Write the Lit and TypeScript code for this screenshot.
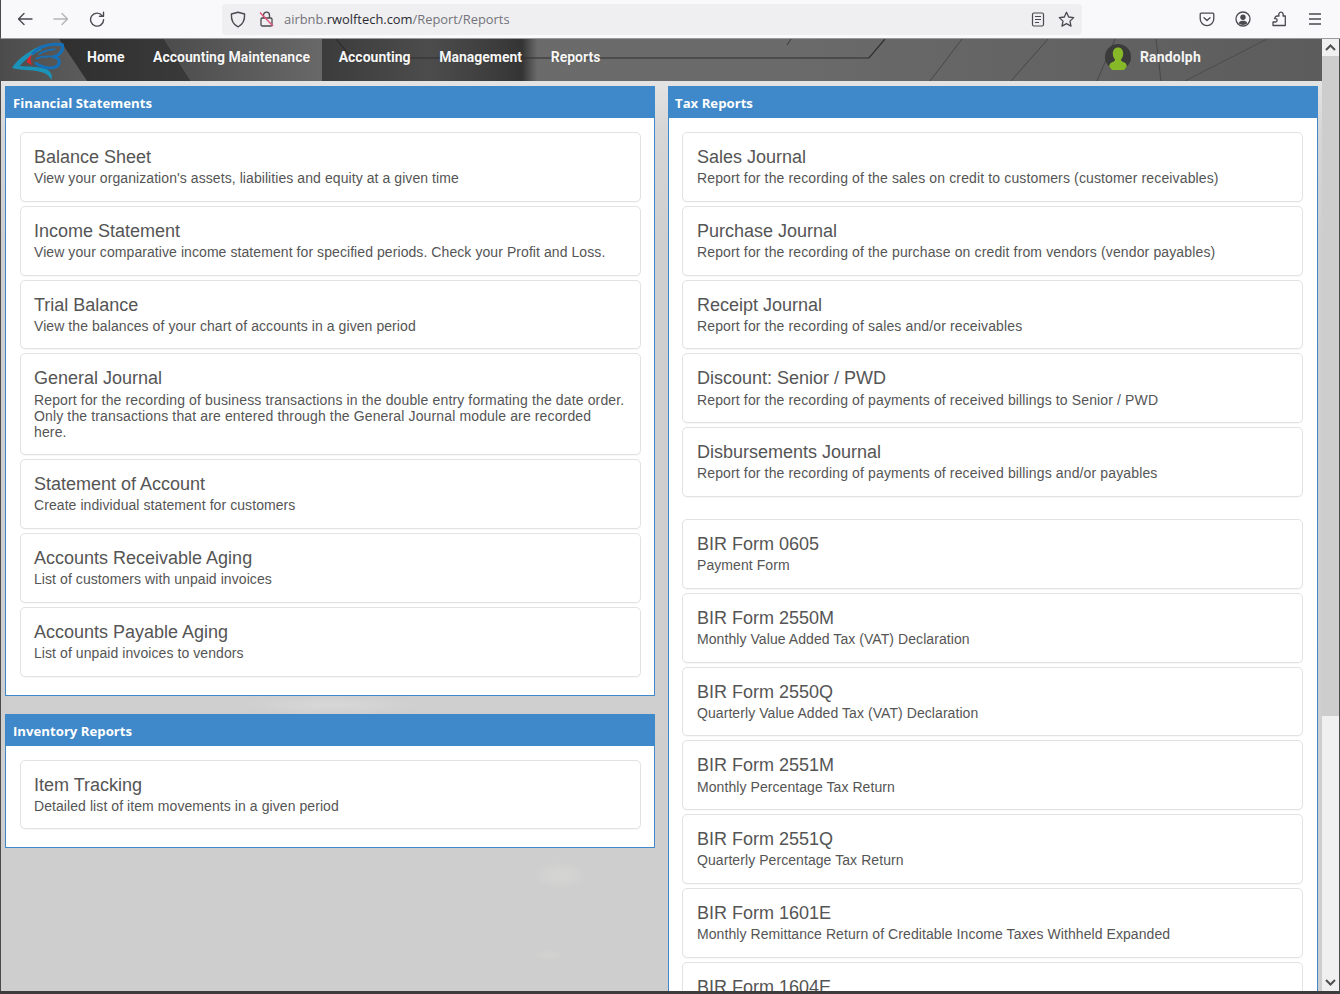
import { LitElement, html, css, svg } from "lit";
import { customElement } from "lit/decorators.js";

type Item = [string, string];

const financial: Item[] = [
  ["Balance Sheet", "View your organization's assets, liabilities and equity at a given time"],
  ["Income Statement", "View your comparative income statement for specified periods. Check your Profit and Loss."],
  ["Trial Balance", "View the balances of your chart of accounts in a given period"],
  ["General Journal", "Report for the recording of business transactions in the double entry formating the date order.\nOnly the transactions that are entered through the General Journal module are recorded\nhere."],
  ["Statement of Account", "Create individual statement for customers"],
  ["Accounts Receivable Aging", "List of customers with unpaid invoices"],
  ["Accounts Payable Aging", "List of unpaid invoices to vendors"],
];
const inventory: Item[] = [["Item Tracking", "Detailed list of item movements in a given period"]];
const journals: Item[] = [
  ["Sales Journal", "Report for the recording of the sales on credit to customers (customer receivables)"],
  ["Purchase Journal", "Report for the recording of the purchase on credit from vendors (vendor payables)"],
  ["Receipt Journal", "Report for the recording of sales and/or receivables"],
  ["Discount: Senior / PWD", "Report for the recording of payments of received billings to Senior / PWD"],
  ["Disbursements Journal", "Report for the recording of payments of received billings and/or payables"],
];
const forms: Item[] = [
  ["BIR Form 0605", "Payment Form"],
  ["BIR Form 2550M", "Monthly Value Added Tax (VAT) Declaration"],
  ["BIR Form 2550Q", "Quarterly Value Added Tax (VAT) Declaration"],
  ["BIR Form 2551M", "Monthly Percentage Tax Return"],
  ["BIR Form 2551Q", "Quarterly Percentage Tax Return"],
  ["BIR Form 1601E", "Monthly Remittance Return of Creditable Income Taxes Withheld Expanded"],
  ["BIR Form 1604E", "Annual Information Return of Creditable Income Taxes Withheld"],
];

const navLinks = ["Home", "Accounting Maintenance", "Accounting", "Management", "Reports"];

@customElement("app-root")
export class AppRoot extends LitElement {
  static styles = css`
    :host { display: block; height: 994px; overflow: hidden; font-family: "Liberation Sans", Arial, sans-serif; }
    .shell { height: 994px; display: flex; flex-direction: column; overflow: hidden; background: #3c3c3c; }
    .toolbar { height: 38px; flex: none; display: flex; align-items: center; background: #f9f9fb; border-bottom: 1px solid #9a9a9a; border-left: 1px solid #4a4a4a; }
    .tb { display: block; flex: none; color: #4a4a4f; }
    .back { margin-left: 16px; }
    .fwd { margin-left: 20px; color: #b4b4b8; }
    .reload { margin-left: 20px; }
    .url { margin-left: 117px; width: 860px; height: 31px; background: #efeff1; border-radius: 4px; display: flex; align-items: center; flex: none; }
    .shield { margin-left: 8px; }
    .lock { margin-left: 13px; }
    .addr { margin-left: 10px; font: 12.9px "Open Sans", sans-serif; color: #73737a; white-space: nowrap; flex: 1; }
    .addr b { font-weight: 400; color: #2b2b33; }
    .reader { margin-right: 13px; }
    .star { margin-right: 7px; }
    .pocket { margin-left: 117px; }
    .account { margin-left: 20px; }
    .ext { margin-left: 20px; }
    .menu { margin-left: 20px; }

    .body { flex: 1; min-height: 0; display: flex; margin-bottom: 3px; border-left: 1px solid #4a4a4a; overflow: hidden; }
    .page { flex: 1; min-width: 0; display: flex; flex-direction: column; overflow: hidden;
      background:
        radial-gradient(ellipse 26px 13px at 559px 836px, #d4d5d3 0%, #d4d5d3 30%, transparent 100%),
        radial-gradient(ellipse 16px 6px at 547px 916px, #d3d3d1 0%, transparent 100%),
        radial-gradient(ellipse 90px 10px at 330px 666px, #d8d8d8 0%, transparent 100%),
        linear-gradient(#e6e6e6 0, #e2e2e2 47px, #d6d6d6 90px, #cfcfcf 200px, #cecece 100%); }

    .nav { position: relative; height: 42px; flex: none; display: flex; align-items: center; overflow: hidden; background: #5e5e5e; }
    .navart { position: absolute; left: 0; top: 0; width: 1321px; height: 42px; }
    .logo { position: relative; flex: none; margin-left: 7px; display: block; }
    .links { position: relative; display: flex; gap: 28.6px; margin-left: 19px; margin-top: -6px; }
    .links a { font: 700 14px Roboto, sans-serif; color: #f6f6f6; white-space: nowrap; text-shadow: 0 0 1px rgba(0,0,0,.4); }
    .user { position: relative; margin-left: auto; margin-right: 121px; display: flex; align-items: center; gap: 9px; margin-top: -6px; }
    .user span { font: 700 14px Roboto, sans-serif; letter-spacing: 0.2px; color: #f4f4f4; }
    .avatar { display: block; }

    .columns { flex: 1; min-height: 0; display: grid; grid-template-columns: 650px 650px; column-gap: 13px; padding: 5px 0 0 4px; align-items: start; }
    .col { display: flex; flex-direction: column; gap: 18px; }
    .panel { background: #fff; border: 1px solid #3f88c9; border-top: 0; }
    .panel h2 { margin: 0 -1px; height: 32px; padding-left: 8px; background: #3f88c9; color: #fff; font: 700 13.2px/34px "Open Sans", sans-serif; }
    .right h2 { padding-left: 7px; }
    .list { padding: 14px 13px 18px 14px; display: flex; flex-direction: column; gap: 4px; }
    .right .list { padding-left: 13px; padding-right: 14px; }
    .spaced { height: 14px; }
    .card { border: 1px solid #e2e2e2; border-radius: 5px; background: #fff; padding: 15px 13px 14.5px; box-shadow: 0 1px 1px rgba(0,0,0,.03); }
    .right .card { padding-left: 14px; }
    .card h3 { margin: 0 0 2.5px; font: 400 18px/19.8px "Liberation Sans", Arial, sans-serif; color: #555; }
    .card p { margin: 0; font: 400 14px/16px "Liberation Sans", Arial, sans-serif; letter-spacing: 0.075px; color: #555; white-space: pre-line; }
    .card.journals p, .card.long p { letter-spacing: 0.135px; }
    .card.forms p { letter-spacing: 0.07px; }

    .scrollbar { width: 17px; flex: none; display: flex; flex-direction: column; background: #f0f0f0; border-right: 1px solid #4a4a4a; }
    .sb-up { height: 17px; background: #f0f0f0; display: flex; align-items: center; justify-content: center; }
    .thumb { height: 660px; background: #cdcdcd; }
    .track { flex: 1; }
    .sb-down { height: 17px; display: flex; align-items: center; justify-content: center; }
  `;

  private card([title, text]: Item, cls = "") {
    return html`<div class="card ${cls}"><h3>${title}</h3><p>${text}</p></div>`;
  }

  private navArt() {
    return svg`
      <svg class="navart" viewBox="0 0 1321 42" preserveAspectRatio="none" aria-hidden="true">
        <defs>
          <linearGradient id="g0" x1="0" x2="1"><stop offset="0" stop-color="#4c4c4c"/><stop offset="1" stop-color="#5c5c5c"/></linearGradient>
          <linearGradient id="g1" x1="0" x2="1"><stop offset="0" stop-color="#2f2f2f"/><stop offset="1" stop-color="#3a3a3a"/></linearGradient>
          <linearGradient id="g2" x1="0" x2="1"><stop offset="0" stop-color="#4c4c4c"/><stop offset="1" stop-color="#686868"/></linearGradient>
          <linearGradient id="g3" x1="0" x2="1"><stop offset="0" stop-color="#3c3c3c"/><stop offset="0.5" stop-color="#4c4c4c"/><stop offset="0.82" stop-color="#3c3c3c"/><stop offset="0.93" stop-color="#343434"/><stop offset="1" stop-color="#6a6a6a"/></linearGradient>
          <linearGradient id="g4" x1="0" x2="1"><stop offset="0" stop-color="#6c6c6c"/><stop offset="0.6" stop-color="#6a6a6a"/><stop offset="1" stop-color="#5c5c5c"/></linearGradient>
        </defs>
        <rect width="1321" height="42" fill="url(#g4)"/>
        <polygon points="0,0 58,0 86,42 0,42" fill="url(#g0)"/>
        <polygon points="58,0 163,0 190,42 86,42" fill="url(#g1)"/>
        <polygon points="163,0 321,0 321,42 190,42" fill="url(#g2)"/>
        <rect x="321" width="215" height="42" fill="url(#g3)"/>
        <path d="M335 0 L351 19 H868 L884 0" fill="none" stroke="#2e2e2e" stroke-width="1.2"/>
        <path d="M790 0 L786 6" stroke="#3a3a3a" stroke-width="1"/>
        <path d="M929 42 L961 0" stroke="#484848" stroke-width="1"/>
        <path d="M1010 42 L1047 0" stroke="#484848" stroke-width="1"/>
        <path d="M1096 42 L1114 0" stroke="#484848" stroke-width="1"/>
        <path d="M1155 0 L1160 42" stroke="#484848" stroke-width="1"/>
        <path d="M1184 42 L1266 0" stroke="#4c4c4c" stroke-width="1"/>
      </svg>`;
  }

  render() {
    return html`
      <div class="shell">
        <div class="toolbar">
          <svg class="tb back" width="16" height="16" viewBox="0 0 16 16" fill="none" stroke="currentColor" stroke-width="1.4" stroke-linecap="round" stroke-linejoin="round"><path d="M15 8H1.5M7 2.5 1.5 8 7 13.5"/></svg>
          <svg class="tb fwd" width="16" height="16" viewBox="0 0 16 16" fill="none" stroke="currentColor" stroke-width="1.4" stroke-linecap="round" stroke-linejoin="round"><path d="M1 8h13.5M9 2.5 14.5 8 9 13.5"/></svg>
          <svg class="tb reload" width="16" height="16" viewBox="0 0 16 16" fill="none" stroke="currentColor" stroke-width="1.4" stroke-linecap="round" stroke-linejoin="round"><path d="M13.2 4.6A6.5 6.5 0 1 0 14.6 8.6"/><path d="M14.5 1.2v4h-4" /></svg>
          <div class="url">
            <svg class="tb shield" width="16" height="17" viewBox="0 0 16 17" fill="none" stroke="currentColor" stroke-width="1.4" stroke-linejoin="round"><path d="M8 1.2 14.6 3c.3 6.5-1.7 10.6-6.6 12.8C3.100 13.600 1.100 9.500 1.400 3z"/></svg>
            <svg class="tb lock" width="15" height="16" viewBox="0 0 15 16" fill="none"><path d="M4.500 7V4.200a3 3 0 0 1 6 0V7" stroke="#4a4a4f" stroke-width="1.300"/><rect x="2" y="7" width="11" height="8" rx="1.300" stroke="#4a4a4f" stroke-width="1.300"/><path d="M1 1.500 14 15" stroke="#e0557a" stroke-width="1.500"/></svg>
            <span class="addr">airbnb.<b>rwolftech.com</b>/Report/Reports</span>
            <svg class="tb reader" width="14" height="15" viewBox="0 0 14 15" fill="none" stroke="currentColor" stroke-width="1.200"><rect x="1.500" y="1" width="11" height="13" rx="1.500"/><path d="M4 4.500h6M4 7.500h6M4 10.500h4"/></svg>
            <svg class="tb star" width="17" height="17" viewBox="0 0 17 17" fill="none" stroke="currentColor" stroke-width="1.300" stroke-linejoin="round"><path d="M8.500 1.300 10.700 6l5 .6-3.700 3.500 1 5-4.500-2.500L4 15.100l1-5L1.300 6.600l5-.6z"/></svg>
          </div>
          <svg class="tb pocket" width="16" height="15" viewBox="0 0 16 15" fill="none" stroke="currentColor" stroke-width="1.300" stroke-linejoin="round" stroke-linecap="round"><path d="M2.300 1.200h11.400c.6 0 1.100.5 1.100 1.100v4.200A6.800 6.800 0 0 1 8 13.600 6.800 6.800 0 0 1 1.200 6.500V2.300c0-.6.500-1.100 1.100-1.100z"/><path d="M5 5.800 8 8.600l3-2.800"/></svg>
          <svg class="tb account" width="16" height="16" viewBox="0 0 16 16" fill="none"><circle cx="8" cy="8" r="7" stroke="currentColor" stroke-width="1.300"/><circle cx="8" cy="6.300" r="2.700" fill="currentColor"/><path d="M3.500 12.200C4.500 10.300 6 9.800 8 9.800s3.500.5 4.500 2.400A6.500 6.500 0 0 1 8 14a6.500 6.500 0 0 1-4.500-1.800z" fill="currentColor"/></svg>
          <svg class="tb ext" width="16" height="16" viewBox="0 0 16 16" fill="none" stroke="currentColor" stroke-width="1.300" stroke-linejoin="round"><path d="M6 5h2c-.7-2 .2-3.800 2-3.800s2.700 1.800 2 3.800h2.300v9.500H2V11h2.300c1 0 1.700-.6 1.700-1.300V8.800C6 8 5.300 7.600 4.300 7.600H3.500C4 6 5 5 6 5z"/></svg>
          <svg class="tb menu" width="16" height="14" viewBox="0 0 16 14" fill="none" stroke="currentColor" stroke-width="1.300"><path d="M2 2h12M2 7h12M2 12h12"/></svg>
        </div>
        <div class="body">
          <div class="page">
            <div class="nav">
              ${this.navArt()}
              <svg class="logo" width="60" height="42" viewBox="0 -3 180 126" fill="none">
                <path d="M104 16C70 28 30 55 12 84c23 8 58 4 88 12 15 4 24 12 30 24 5-15-2-28-18-34-22-6-52-6-77-8 15-18 40-36 65-48z" fill="#1b93b8"/>
                <path d="M72 42C95 18 130 10 163 14c5 16-8 34-28 36 15 2 25 12 15 26-15 14-50 8-68-8" stroke="#1670b8" stroke-width="9"/>
                <path d="M84 56c18-7 35-8 51-6M92 44c15-12 33-16 50-16" stroke="#1670b8" stroke-width="5"/>
                <path d="M72 42C60 52 55 62 58 68c6 2 12 6 16 8-8-10-8-22-2-34z" fill="#e0242f"/>
              </svg>
              <div class="links">${navLinks.map((l) => html`<a>${l}</a>`)}</div>
              <div class="user">
                <svg class="avatar" width="26" height="28" viewBox="0 0 26 28"><circle cx="13" cy="14" r="13" fill="#3b3b3b"/><path d="M13 4.500c3.300 0 5.200 2.700 5.200 6 0 2.700-1 4.700-2.300 6 .2 1.600 1.300 2.200 3 2.800 2 .7 2.700 2.200 2.900 4.200L19 27H7l-2.800-3.500c.2-2 .9-3.500 2.900-4.200 1.700-.6 2.800-1.200 3-2.800-1.300-1.300-2.300-3.300-2.300-6 0-3.300 1.900-6 5.200-6z" fill="#86b828"/></svg>
                <span>Randolph</span>
              </div>
            </div>
            <div class="columns">
              <div class="col">
                <section class="panel">
                  <h2>Financial Statements</h2>
                  <div class="list">${financial.map((i) => this.card(i, i[1].includes("\n") ? "long" : ""))}</div>
                </section>
                <section class="panel">
                  <h2>Inventory Reports</h2>
                  <div class="list">${inventory.map((i) => this.card(i))}</div>
                </section>
              </div>
              <div class="col">
                <section class="panel right">
                  <h2>Tax Reports</h2>
                  <div class="list">
                    ${journals.map((i) => this.card(i, "journals"))}
                    <div class="spaced"></div>
                    ${forms.map((i) => this.card(i, "forms"))}
                  </div>
                </section>
              </div>
            </div>
          </div>
          <div class="scrollbar">
            <div class="sb-up"><svg width="11" height="7" viewBox="0 0 11 7" fill="none" stroke="#505050" stroke-width="2"><path d="M1 6l4.500-4.500L10 6"/></svg></div>
            <div class="thumb"></div>
            <div class="track"></div>
            <div class="sb-down"><svg width="11" height="7" viewBox="0 0 11 7" fill="none" stroke="#505050" stroke-width="2"><path d="M1 1l4.500 4.500L10 1"/></svg></div>
          </div>
        </div>
      </div>
    `;
  }
}
